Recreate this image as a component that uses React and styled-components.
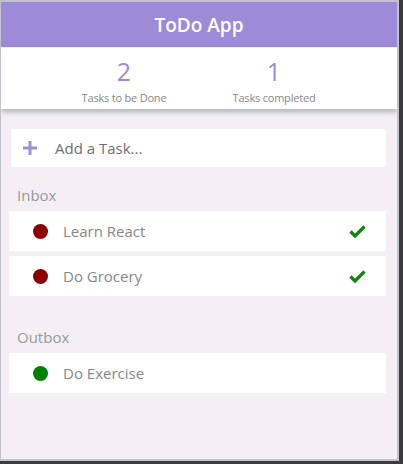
import styled, { createGlobalStyle } from "styled-components";

const GlobalStyle = createGlobalStyle`
  html, body {
    margin: 0;
    padding: 0;
    background: #3b3b3d;
  }
  body {
    font-family: "Open Sans", "Noto Sans", sans-serif;
  }
`;

const tasks = [
  { id: 1, title: "Learn React", done: false },
  { id: 2, title: "Do Grocery", done: false },
  { id: 3, title: "Do Exercise", done: true },
];

function CheckIcon() {
  return (
    <svg width="17" height="13" viewBox="0 0 17 13">
      <path
        d="M1.5 6.5 L6 11 L15.5 1.5"
        fill="none"
        stroke="#0a870a"
        strokeWidth="3.2"
        strokeLinejoin="miter"
      />
    </svg>
  );
}

function PlusIcon() {
  return (
    <svg width="14" height="14" viewBox="0 0 14 14">
      <path d="M7 0 V14 M0 7 H14" stroke="#a08ddc" strokeWidth="3" />
    </svg>
  );
}

export default function App() {
  const inbox = tasks.filter((t) => !t.done);
  const outbox = tasks.filter((t) => t.done);

  return (
    <Frame>
      <GlobalStyle />
      <AppWindow>
        <Header>ToDo App</Header>
        <Stats>
          <Stat>
            <StatNumber>{inbox.length}</StatNumber>
            <StatLabel>Tasks to be Done</StatLabel>
          </Stat>
          <Stat>
            <StatNumber>{outbox.length}</StatNumber>
            <StatLabel>Tasks completed</StatLabel>
          </Stat>
        </Stats>
        <Content>
          <AddTask>
            <PlusIcon />
            <AddText>Add a Task...</AddText>
          </AddTask>
          <SectionTitle>Inbox</SectionTitle>
          <TaskList>
            {inbox.map((t) => (
              <TaskRow key={t.id}>
                <Dot $done={t.done} />
                <TaskTitle>{t.title}</TaskTitle>
                <CheckWrap>
                  <CheckIcon />
                </CheckWrap>
              </TaskRow>
            ))}
          </TaskList>
          <SectionTitle $gap>Outbox</SectionTitle>
          <TaskList>
            {outbox.map((t) => (
              <TaskRow key={t.id}>
                <Dot $done={t.done} />
                <TaskTitle>{t.title}</TaskTitle>
              </TaskRow>
            ))}
          </TaskList>
        </Content>
      </AppWindow>
    </Frame>
  );
}

const Frame = styled.div`
  width: 399px;
  height: 461px;
  box-sizing: border-box;
  padding: 2px 2px 2px 1px;
  background: #c2c2ca;
`;

const AppWindow = styled.div`
  width: 396px;
  height: 457px;
  background: #f3eff5;
  display: flex;
  flex-direction: column;
  overflow: hidden;
`;

const Header = styled.header`
  height: 45px;
  background: #9e8bd7;
  color: #fff;
  font-size: 19px;
  font-weight: 600;
  display: flex;
  align-items: center;
  justify-content: center;
`;

const Stats = styled.div`
  height: 61px;
  background: #fff;
  border-top: 1px solid #efedf5;
  display: flex;
  justify-content: center;
  box-shadow: 0 3px 5px rgba(60, 60, 80, 0.35);
  position: relative;
  z-index: 1;
`;

const Stat = styled.div`
  width: 150px;
  display: flex;
  flex-direction: column;
  align-items: center;
  padding-top: 9px;
`;

const StatNumber = styled.div`
  font-size: 25px;
  line-height: 28px;
  color: #9e8bd7;
`;

const StatLabel = styled.div`
  font-size: 11px;
  line-height: 14px;
  margin-top: 6px;
  letter-spacing: -0.2px;
  color: #888;
`;

const Content = styled.main`
  padding: 20px 11px 0 8px;
  display: flex;
  flex-direction: column;
`;

const AddTask = styled.div`
  margin-left: 2px;
  height: 38px;
  background: #fff;
  border-radius: 3px;
  display: flex;
  align-items: center;
  padding-left: 12px;
  gap: 18px;
`;

const AddText = styled.span`
  font-size: 15px;
  color: #707070;
`;

const SectionTitle = styled.div`
  font-size: 15px;
  color: #999;
  padding-left: 8px;
  margin-top: ${(p) => (p.$gap ? "31px" : "18px")};
  margin-bottom: 6px;
  line-height: 20px;
`;

const TaskList = styled.div`
  display: flex;
  flex-direction: column;
  gap: 5px;
`;

const TaskRow = styled.div`
  height: 40px;
  background: #fff;
  display: flex;
  align-items: center;
  padding-left: 24px;
  padding-right: 20px;
`;

const Dot = styled.span`
  width: 15px;
  height: 15px;
  border-radius: 50%;
  background: ${(p) => (p.$done ? "#008000" : "#8b0000")};
  margin-right: 15px;
  flex-shrink: 0;
`;

const TaskTitle = styled.span`
  flex: 1;
  font-size: 15px;
  color: #888;
`;

const CheckWrap = styled.span`
  display: flex;
  align-items: center;
`;
